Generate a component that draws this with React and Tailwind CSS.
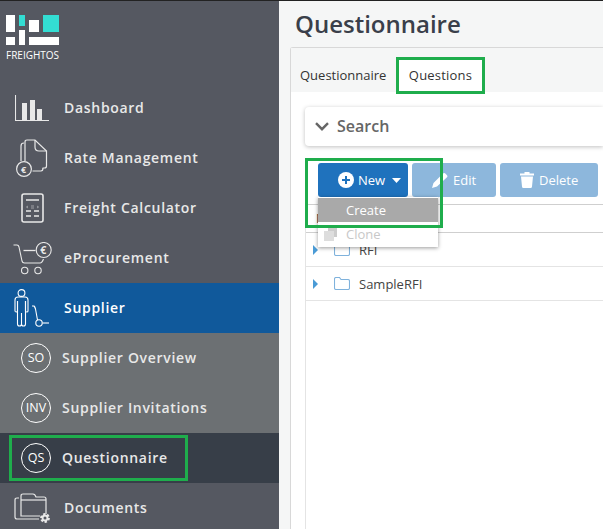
import React from 'react';

function DashboardIcon() {
  return (
    <svg width="34" height="26" viewBox="0 0 34 26" fill="none" stroke="#e8e8e8">
      <path d="M.5 0v25.500M0 25.500h34" strokeWidth="1.100" />
      <path d="M7 8h5v17H7zM15 5h5v20h-5zM22 14h5v11h-5z" fill="#e8e8e8" stroke="none" />
    </svg>
  );
}

function RateIcon() {
  return (
    <svg width="32" height="38" viewBox="0 0 32 38" fill="none" stroke="#e8e8e8" strokeWidth="1.200">
      <path d="M5 22V7q0-3 3-3" />
      <path d="M9 22V3q0-2 2-2h8l11.500 11v15q0 2-2 2h-2" />
      <path d="M19 1v7q0 4 4 4h7.500" />
      <path d="M16.500 32H25q2 0 2-3" />
      <circle cx="8" cy="30" r="7.400" />
      <text x="8" y="33.500" fontSize="9" fontWeight="700" textAnchor="middle" fill="#e8e8e8" stroke="none" fontFamily="'Open Sans', sans-serif">€</text>
    </svg>
  );
}

function CalcIcon() {
  return (
    <svg width="23" height="30" viewBox="0 0 23 30" fill="none" stroke="#e8e8e8">
      <rect x="1" y="1" width="21" height="28" rx="2" strokeWidth="1.600" />
      <path d="M5 7h13" strokeWidth="1.500" />
      <path d="M7 13l-1.500 1L7 15M16 13l1.500 1-1.500 1M10 13h3M10 15h3" strokeWidth="0.500" />
      <path d="M5 18h5M13 18h5M5 23h5M13 23h5" strokeWidth="1.400" />
    </svg>
  );
}

function CartIcon() {
  return (
    <svg width="39" height="33" viewBox="0 0 39 33" fill="none" stroke="#e8e8e8" strokeWidth="1.100">
      <path d="M.5 3H4q1.500 0 2 2l3 14q.5 2 2.500 2H27q2 0 3.500-4" />
      <path d="M10.500 8.500H22.500" strokeWidth="1.300" />
      <circle cx="11.700" cy="28.500" r="3.200" />
      <circle cx="25" cy="28.500" r="3.200" />
      <circle cx="30.700" cy="8" r="7.500" />
      <text x="30.700" y="12" fontSize="10.500" fontWeight="700" textAnchor="middle" fill="#e8e8e8" stroke="none" fontFamily="'Open Sans', sans-serif">€</text>
    </svg>
  );
}

function SupplierIcon() {
  return (
    <svg width="36" height="38" viewBox="0 0 36 38" fill="none" stroke="#fff" strokeWidth="1.100">
      <circle cx="7.500" cy="4" r="3.400" />
      <path d="M3.500 12v10q0 1-1.200 1T1 22V11q0-3 3-3h7q3 0 3 3v11q0 1-1.200 1t-1.300-1V12" />
      <path d="M3.500 12v23q0 2 2 2t2-2V24v11q0 2 2 2t2-2V12" />
      <path d="M18 17h2q1 1 1.500 3l2 11" />
      <circle cx="25" cy="34" r="3.200" />
      <path d="M28.500 34H35" />
    </svg>
  );
}

function DocumentsIcon() {
  return (
    <svg width="37" height="31" viewBox="0 0 37 31" fill="none" stroke="#e8e8e8" strokeWidth="1.200">
      <path d="M25 26H3q-2 0-2-2V7q0-2 2-2h2" />
      <path d="M26 23H7V3q0-2 2-2h10q2 0 3 3h8q2 0 2 2v15" />
      <path d="M7 7h25" />
      <circle cx="31" cy="25" r="3.400" fill="#e8e8e8" stroke="#e8e8e8" strokeWidth="3" strokeDasharray="2 1.500" />
      <circle cx="31" cy="25" r="1.500" fill="#555861" stroke="none" />
    </svg>
  );
}

function LogoMark() {
  return (
    <div className="flex flex-col items-start">
      <svg width="53" height="30" viewBox="0 0 53 30">
        <path d="M0 0h9v17H0zM0 22h9v8H0zM13 15h6v15h-6zM23 5h10v12H23zM23 22h30v8H23z" fill="#fff" />
        <path d="M13 0h6v11h-6zM37 0h16v17H37z" fill="#33ddd3" />
      </svg>
      <span className="mt-[4px] text-[10px] leading-[12px] text-white">FREIGHTOS</span>
    </div>
  );
}

function NavItem({ icon, label, className = '' }) {
  return (
    <div className={`h-[50px] flex items-center text-[14px] font-semibold tracking-[0.7px] text-[#e8e8e8] ${className}`}>
      <div className="w-[64px] shrink-0 flex justify-center">{icon}</div>
      <span className="mb-[2px]">{label}</span>
    </div>
  );
}

function Circle({ text }) {
  return (
    <div className="w-[30px] h-[30px] rounded-full border border-white flex items-center justify-center text-[12.500px] font-normal tracking-normal text-white">
      {text}
    </div>
  );
}

function SubItem({ code, label }) {
  return (
    <div className="h-[50px] flex items-center pl-[21px] gap-[11px] text-[14px] font-semibold tracking-[0.7px] text-[#e8e8e8]">
      <Circle text={code} />
      <span className="mb-[2px]">{label}</span>
    </div>
  );
}

function Sidebar() {
  return (
    <aside className="w-[279px] shrink-0 h-full bg-[#555861] overflow-hidden">
      <div className="h-[82px] pl-[6px] pt-[14px] flex">
        <LogoMark />
      </div>
      <NavItem icon={<DashboardIcon />} label="Dashboard" />
      <NavItem icon={<RateIcon />} label="Rate Management" />
      <NavItem icon={<CalcIcon />} label="Freight Calculator" />
      <NavItem icon={<CartIcon />} label="eProcurement" />
      <NavItem icon={<SupplierIcon />} label="Supplier" className="bg-[#10599b] !text-white" />
      <div className="bg-[#6c7073]">
        <SubItem code="SO" label="Supplier Overview" />
        <SubItem code="INV" label="Supplier Invitations" />
      </div>
      <div className="h-[50px] bg-[#373e48] flex items-center px-[9px]">
        <div className="w-[179px] h-[46px] border-[3px] border-[#1fad4c] pl-[9px] gap-[11px] flex items-center text-[14px] font-semibold tracking-[0.7px] text-[#e8e8e8]">
          <Circle text="QS" />
          <span className="mb-[2px]">Questionnaire</span>
        </div>
      </div>
      <NavItem icon={<DocumentsIcon />} label="Documents" />
    </aside>
  );
}

function Toolbar() {
  return (
    <div className="h-[42px] pl-[12px] pt-[1px] flex gap-[4px] text-[13px] text-white">
      <button className="w-[90px] h-[34px] bg-[#1f72bd] rounded-[3px] flex items-center pl-[20px] gap-[4px]">
        <svg width="16" height="16" viewBox="0 0 16 16">
          <circle cx="8" cy="8" r="8" fill="#fff" />
          <path d="M8 4v8M4 8h8" stroke="#1f72bd" strokeWidth="2" />
        </svg>
        <span className="mt-[2px]">New</span>
        <svg width="9" height="5" viewBox="0 0 9 5" className="ml-[3px]"><path d="M0 0h9L4.500 5z" fill="#fff" /></svg>
      </button>
      <button className="w-[84px] h-[34px] bg-[#8db7dc] rounded-[3px] flex items-center pl-[20px] gap-[5px]">
        <svg width="16" height="16" viewBox="0 0 16 16"><path d="M0 16l1.500-5L11 1.500q1-1 2-.3l2 2q1 1 0 2L5 14.500z" fill="#fff" /></svg>
        <span className="mt-[2px]">Edit</span>
      </button>
      <button className="w-[98px] h-[34px] bg-[#8db7dc] rounded-[3px] flex items-center pl-[20px] gap-[5px]">
        <svg width="14" height="16" viewBox="0 0 14 16"><path d="M0 1.500h4.500V0h5v1.500H14v2H0zM1 4.500h12l-1 10q0 1.500-1.500 1.500h-7Q2 16 2 14.500z" fill="#fff" /></svg>
        <span className="mt-[2px]">Delete</span>
      </button>
    </div>
  );
}

function TreeRow({ label }) {
  return (
    <div className="h-[34px] border-b border-[#e4e4e4] flex items-center text-[13px] text-[#444]">
      <svg width="5" height="10" viewBox="0 0 5 10" className="ml-[7px]"><path d="M0 0l5 5-5 5z" fill="#4a9bd6" /></svg>
      <svg width="16" height="13" viewBox="0 0 16 13" fill="none" stroke="#7fb2dc" strokeWidth="1.100" className="ml-[16px]">
        <path d="M.5 11V2q0-1.500 1.500-1.500h3.500L7 2.500h7q1.500 0 1.500 1.500v7q0 1.500-1.500 1.500H2Q.5 12.500.5 11z" />
      </svg>
      <span className="ml-[9px] mt-[2px]">{label}</span>
    </div>
  );
}

function Panel() {
  return (
    <section className="relative h-full mt-[8px] ml-[11px] bg-white border-l border-t border-[#d8d8d8] rounded-tl-[3px]">
      <div className="h-[44px] bg-[#f5f6f6] flex text-[13px] text-[#333]">
        <div className="w-[105px] h-[37px] mt-[9px] pl-[9px] flex items-center">Questionnaire</div>
        <div className="w-[89px] h-[37px] mt-[9px] border-[3px] border-[#1fad4c] bg-white flex items-center justify-center font-medium tracking-[0.2px]">Questions</div>
      </div>
      <div className="mt-[15px] ml-[14px] h-[39px] rounded-l-[4px] bg-white shadow-[0_1px_4px_rgba(0,0,0,0.25)] flex items-center pl-[10px] pb-[1px] gap-[8px] text-[16px] font-semibold text-[#666]">
        <svg width="14" height="9" viewBox="0 0 14 9" fill="none" stroke="#666" strokeWidth="2.400"><path d="M1 1.200l6 6 6-6" /></svg>
        <span>Search</span>
      </div>
      <div className="mt-[16px] ml-[14px] border-l border-[#e4e4e4]">
        <Toolbar />
        <div className="h-[29px] pl-[10px] flex items-center border-t border-b border-[#cfcfcf] text-[13px] text-[#444]">Name</div>
        <TreeRow label="RFI" />
        <TreeRow label="SampleRFI" />
        <div className="h-[300px]" />
      </div>
      {/* open dropdown and the green callout lie over the toolbar */}
      <div className="absolute left-[27px] top-[149px] w-[120px] h-[50px] bg-white shadow-[0_1px_4px_rgba(0,0,0,0.4)] text-[13px]">
        <div className="h-[24px] mt-[1px] bg-[#a9a9a9] text-white pl-[28px] pt-[1px] flex items-center">Create</div>
        <div className="relative h-[24px] pl-[28px] pt-[1px] flex items-center text-[#c8c8c8]">
          <svg width="13" height="13" viewBox="0 0 13 13" className="absolute left-[6px] top-[6px]">
            <path d="M4 0h9v9H4z" fill="#ccc" /><path d="M0 3h10v10H0z" fill="#ddd" />
          </svg>
          Clone
        </div>
      </div>
      <div className="absolute left-[14px] top-[110px] w-[138px] h-[70px] border-[3px] border-[#1fad4c]" />
    </section>
  );
}

export default function App() {
  return (
    <div className="w-[603px] h-[529px] overflow-hidden flex flex-col bg-[#f5f6f6] font-['Open_Sans',sans-serif]">
      <div className="h-[1px] bg-[#222] shrink-0" />
      <div className="flex flex-1 min-h-0">
        <Sidebar />
        <main className="flex-1 min-w-0 overflow-hidden">
          <h1 className="mt-[7px] ml-[16px] text-[24px] leading-[31px] font-semibold text-[#3a3f4a]">Questionnaire</h1>
          <Panel />
        </main>
      </div>
    </div>
  );
}
